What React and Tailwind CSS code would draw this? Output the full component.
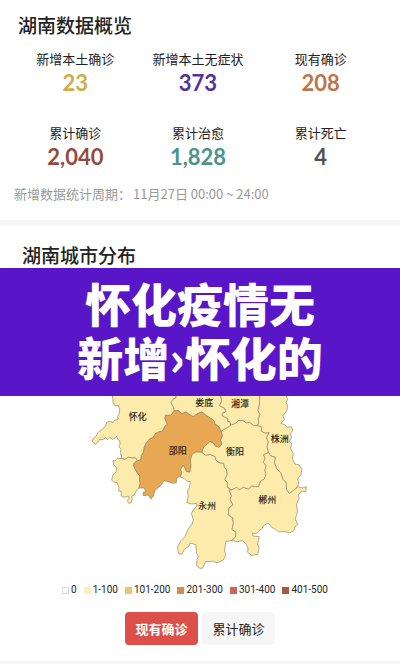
import React, { useState } from "react";

const stats = [
  { label: "新增本土确诊", value: "23", color: "text-[#cfac4c]" },
  { label: "新增本土无症状", value: "373", color: "text-[#5230a0]" },
  { label: "现有确诊", value: "208", color: "text-[#bd7548]" },
  { label: "累计确诊", value: "2,040", color: "text-[#954a40]" },
  { label: "累计治愈", value: "1,828", color: "text-[#4b938b]" },
  { label: "累计死亡", value: "4", color: "text-[#505050]" },
];

const legend = [
  { label: "0", color: "bg-white border border-[#d8d8d8]" },
  { label: "1-100", color: "bg-[#fff0b3]" },
  { label: "101-200", color: "bg-[#edc36b]" },
  { label: "201-300", color: "bg-[#d98b4b]" },
  { label: "301-400", color: "bg-[#cf6654]" },
  { label: "401-500", color: "bg-[#aa573f]" },
];

const tabs = ["现有确诊", "累计确诊"];

const cities = [
  {
    name: "怀化",
    x: 158,
    y: 91,
    d: "M82 10 L84 36 L90 48 L100 46 L104 58 L103 70 L98 78 L99 88 L88 91 L84 98 L74 94 L65 97 L62 108 L52 118 L38 128 L34 138 L25 145 L22 154 L30 163 L38 158 L44 148 L54 149 L61 143 L68 149 L74 143 L83 148 L91 143 L95 139 L98 148 L104 152 L105 163 L102 170 L108 178 L106 187 L110 198 L108 206 L120 208 L130 202 L144 204 L151 203 L157 212 L168 210 L169 196 L176 186 L178 172 L184 158 L194 147 L205 142 L211 131 L221 126 L233 123 L240 108 L247 104 L240 86 L242 76 L258 76 L268 62 L266 52 L258 38 L264 28 L272 24 L275 10 Z",
  },
  {
    d: "M108 206 L98 204 L90 213 L84 211 L86 224 L94 233 L94 245 L84 254 L80 270 L86 276 L96 278 L102 292 L101 303 L109 304 L108 317 L118 322 L130 318 L132 324 L127 332 L131 340 L139 338 L142 326 L139 320 L148 314 L153 304 L162 294 L166 280 L163 270 L165 258 L158 250 L152 240 L146 227 L148 219 L157 212 L151 203 L144 204 L130 202 L120 208 Z",
  },
  {
    name: "娄底",
    x: 358,
    y: 48,
    d: "M275 10 L272 24 L264 28 L258 38 L266 52 L268 62 L280 62 L291 71 L303 66 L315 75 L325 80 L339 70 L351 66 L363 76 L374 83 L387 92 L389 101 L402 111 L408 124 L427 113 L437 106 L435 95 L428 94 L429 86 L412 78 L412 70 L422 66 L420 56 L404 47 L410 34 L406 10 Z",
  },
  {
    name: "湘潭",
    x: 465,
    y: 50,
    d: "M406 10 L410 34 L404 47 L420 56 L422 66 L412 70 L412 78 L429 86 L428 94 L435 95 L437 106 L450 101 L461 92 L474 92 L484 99 L494 97 L505 106 L517 107 L521 99 L520 86 L525 72 L519 62 L523 45 L525 10 Z",
  },
  {
    name: "株洲",
    x: 584,
    y: 156,
    d: "M525 10 L523 45 L519 62 L525 72 L520 86 L521 99 L517 107 L530 111 L529 124 L540 130 L552 128 L544 143 L549 157 L546 170 L550 188 L558 198 L571 202 L568 218 L576 238 L587 248 L594 268 L603 278 L605 300 L613 311 L626 301 L635 293 L642 280 L638 267 L648 253 L651 236 L641 224 L630 222 L622 206 L625 190 L616 176 L620 161 L613 155 L620 141 L616 132 L624 120 L619 110 L608 112 L599 104 L588 100 L598 88 L594 77 L606 61 L608 46 L603 38 L608 26 L600 10 Z",
  },
  {
    name: "衡阳",
    x: 450,
    y: 194,
    d: "M408 124 L427 113 L437 106 L450 101 L461 92 L474 92 L484 99 L494 97 L505 106 L517 107 L530 111 L529 124 L540 130 L552 128 L544 143 L549 157 L546 170 L550 188 L536 194 L540 206 L535 217 L543 226 L540 240 L543 253 L538 267 L527 273 L520 291 L500 288 L491 298 L475 292 L463 300 L455 292 L440 300 L427 292 L427 278 L419 269 L426 254 L424 239 L418 233 L416 221 L402 218 L391 209 L390 200 L376 194 L362 196 L350 187 L356 170 L366 163 L375 154 L386 159 L390 167 L402 172 L411 162 L406 151 L412 138 Z",
  },
  {
    name: "邵阳",
    x: 278,
    y: 191,
    fill: "#e7a753",
    d: "M268 62 L258 76 L242 76 L240 86 L247 104 L240 108 L233 123 L221 126 L211 131 L205 142 L194 147 L184 158 L178 172 L176 186 L169 196 L168 210 L157 212 L148 219 L146 227 L152 240 L158 250 L165 258 L163 270 L166 280 L162 294 L178 294 L181 304 L174 309 L175 317 L190 315 L198 327 L206 318 L209 303 L220 292 L229 285 L237 272 L250 275 L264 280 L274 278 L276 264 L287 257 L291 247 L287 238 L296 226 L304 245 L315 246 L318 229 L316 210 L322 192 L333 186 L350 187 L356 170 L366 163 L375 154 L386 159 L390 167 L402 172 L411 162 L406 151 L412 138 L408 124 L402 111 L389 101 L387 92 L374 83 L363 76 L351 66 L339 70 L325 80 L315 75 L303 66 L291 71 L280 62 Z",
  },
  {
    name: "永州",
    x: 366,
    y: 357,
    d: "M350 187 L333 186 L322 192 L316 210 L318 229 L315 246 L304 245 L296 226 L287 238 L291 247 L286 261 L297 265 L306 274 L316 274 L314 290 L307 304 L310 318 L305 338 L320 342 L334 340 L336 348 L328 356 L319 370 L325 390 L320 404 L308 420 L300 440 L287 453 L277 471 L281 491 L291 493 L298 478 L312 468 L315 459 L332 464 L335 491 L341 499 L336 509 L335 527 L346 536 L354 533 L362 515 L382 514 L397 518 L415 510 L423 494 L418 483 L423 454 L439 452 L452 441 L452 425 L441 419 L445 400 L443 383 L430 375 L432 354 L444 345 L435 327 L440 318 L432 300 L440 300 L427 292 L427 278 L419 269 L426 254 L424 239 L418 233 L416 221 L402 218 L391 209 L390 200 L376 194 L362 196 Z",
  },
  {
    name: "郴州",
    x: 547,
    y: 339,
    d: "M550 188 L536 194 L540 206 L535 217 L543 226 L540 240 L543 253 L538 267 L527 273 L520 291 L500 288 L491 298 L475 292 L463 300 L455 292 L440 300 L432 300 L440 318 L435 327 L444 345 L432 354 L430 375 L443 383 L445 400 L441 419 L452 425 L452 441 L439 452 L458 455 L472 452 L484 463 L489 474 L488 487 L500 496 L518 493 L522 475 L518 462 L523 440 L504 438 L503 429 L514 432 L530 416 L538 405 L551 400 L559 411 L572 418 L581 426 L598 424 L613 429 L626 423 L630 410 L638 403 L631 386 L638 365 L634 345 L642 325 L641 313 L650 303 L662 306 L664 290 L652 294 L640 290 L626 301 L613 311 L605 300 L603 278 L594 268 L587 248 L576 238 L568 218 L571 202 L558 198 Z",
  },
];

const StatItem = ({ label, value, color }) => (
  <div className="flex flex-col items-center">
    <dt className="text-[13px] leading-5">{label}</dt>
    <dd className={`font-[Lato] text-[22px] leading-7 font-bold ${color}`}>
      {value}
    </dd>
  </div>
);

const CityMap = () => (
  <svg
    viewBox="0 18 690 546"
    className="mx-auto block w-[230px]"
    role="img"
    aria-label="湖南城市分布"
  >
    {cities.map((city, i) => (
      <path
        key={i}
        d={city.d}
        fill={city.fill || "#fdebac"}
        stroke="#8f8463"
        strokeWidth="2"
        strokeLinejoin="round"
      />
    ))}
    {cities
      .filter((city) => city.name)
      .map((city) => (
        <text
          key={city.name}
          x={city.x}
          y={city.y}
          textAnchor="middle"
          fontSize="27"
          fontWeight="500"
          fill="#2b2415"
        >
          {city.name}
        </text>
      ))}
  </svg>
);

const App = () => {
  const [active, setActive] = useState(tabs[0]);

  return (
    <main className="bg-white font-['Noto_Sans_CJK_SC',sans-serif] text-[#222]">
      <section className="border-b-6 border-[#f6f6f6] pt-[11px] pb-4">
        <h2 className="px-[18px] text-[19px] leading-7 font-medium">
          湖南数据概览
        </h2>
        <dl className="mt-[10px] grid grid-cols-3 gap-y-[26px] pr-[18px] pl-[14px]">
          {stats.map((item) => (
            <StatItem key={item.label} {...item} />
          ))}
        </dl>
        <p className="mt-[13px] flex gap-[2px] px-[14px] text-[13px] leading-5 text-[#999]">
          <span>新增数据统计周期：</span>
          <span>11月27日 00:00 ~ 24:00</span>
        </p>
      </section>

      <section className="border-b-3 border-[#f6f6f6] pt-4 pb-4">
        <h2 className="px-[22px] text-[19px] leading-[26px] font-medium">
          湖南城市分布
        </h2>
        <h1 className="bg-[#5916c8] pt-[7px] pb-[13px] text-center text-[46px] leading-[54px] font-black text-white">
          怀化疫情无
          <br />
          新增›怀化的
        </h1>
        <CityMap />

        <ul className="flex justify-center gap-[7px] pt-1 pr-[10px] font-[Roboto] text-[10px] leading-4">
          {legend.map((item) => (
            <li key={item.label} className="flex items-center gap-[2px]">
              <span className={`h-[7px] w-[7px] ${item.color}`} />
              {item.label}
            </li>
          ))}
        </ul>

        <div className="mt-[14px] flex justify-center gap-1">
          {tabs.map((tab) => (
            <button
              key={tab}
              type="button"
              onClick={() => setActive(tab)}
              className={`h-[33px] w-[73px] rounded text-[13px] ${
                active === tab
                  ? "bg-[#dc5049] font-bold text-white"
                  : "bg-[#f6f6f6] text-[#222]"
              }`}
            >
              {tab}
            </button>
          ))}
        </div>
      </section>
    </main>
  );
};

export default App;
